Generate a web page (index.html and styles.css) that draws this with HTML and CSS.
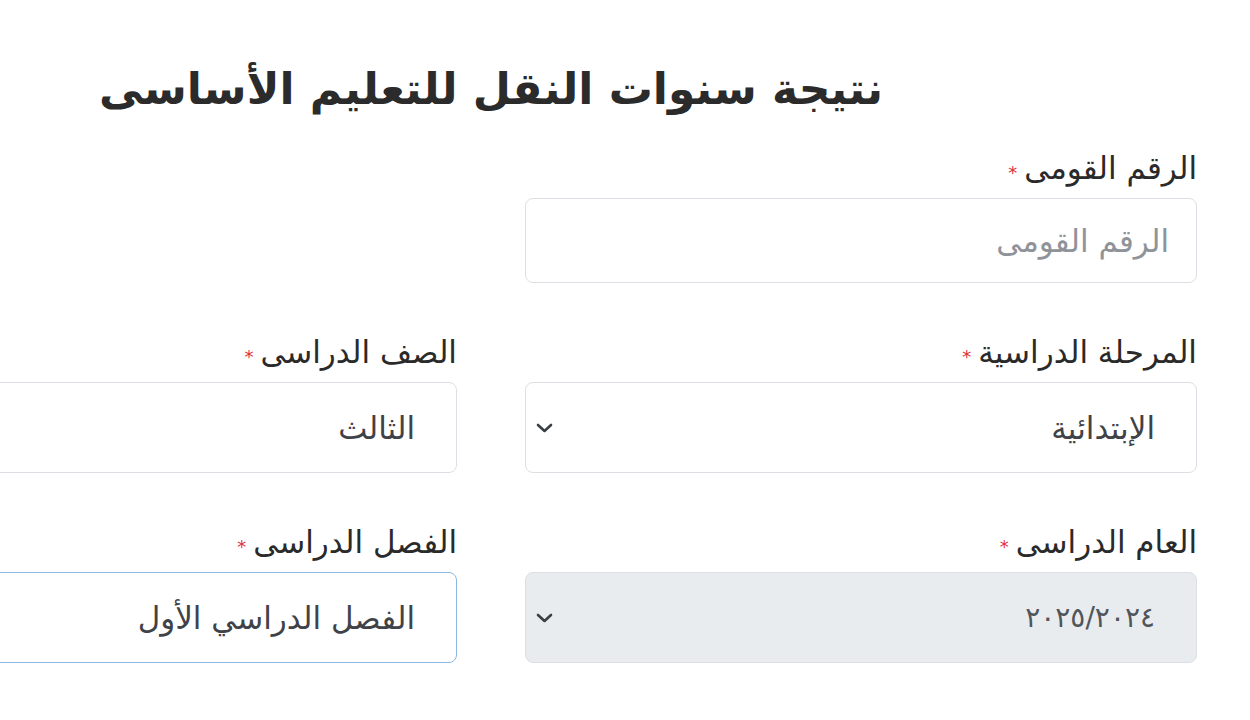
FILE: index.html
```html
<!DOCTYPE html>
<html lang="ar" dir="rtl">
<head>
<meta charset="utf-8">
<title>نتيجة سنوات النقل للتعليم الأساسى</title>
<link rel="stylesheet" href="styles.css">
</head>
<body>
<main class="page">
  <h1 class="title">نتيجة سنوات النقل للتعليم الأساسى</h1>
  <form class="form-grid">
    <div class="field field-full">
      <label class="label">الرقم القومى<span class="req">*</span></label>
      <div class="control input"><span class="placeholder">الرقم القومى</span></div>
    </div>

    <div class="field">
      <label class="label">المرحلة الدراسية<span class="req">*</span></label>
      <div class="control select">
        <span class="value">الإبتدائية</span>
        <svg class="chev" viewBox="0 0 17 10" width="17" height="10"><path d="M2 2l6.5 6 6.5-6" fill="none" stroke="#3a3f44" stroke-width="2.6" stroke-linecap="round" stroke-linejoin="round"/></svg>
      </div>
    </div>
    <div class="field">
      <label class="label">الصف الدراسى<span class="req">*</span></label>
      <div class="control select">
        <span class="value">الثالث</span>
        <svg class="chev" viewBox="0 0 17 10" width="17" height="10"><path d="M2 2l6.5 6 6.5-6" fill="none" stroke="#3a3f44" stroke-width="2.6" stroke-linecap="round" stroke-linejoin="round"/></svg>
      </div>
    </div>

    <div class="field">
      <label class="label">العام الدراسى<span class="req">*</span></label>
      <div class="control select disabled">
        <span class="value year">٢٠٢٥/٢٠٢٤</span>
        <svg class="chev" viewBox="0 0 17 10" width="17" height="10"><path d="M2 2l6.5 6 6.5-6" fill="none" stroke="#3a3f44" stroke-width="2.6" stroke-linecap="round" stroke-linejoin="round"/></svg>
      </div>
    </div>
    <div class="field">
      <label class="label">الفصل الدراسى<span class="req">*</span></label>
      <div class="control select focused">
        <span class="value">الفصل الدراسي الأول</span>
        <svg class="chev" viewBox="0 0 17 10" width="17" height="10"><path d="M2 2l6.5 6 6.5-6" fill="none" stroke="#3a3f44" stroke-width="2.6" stroke-linecap="round" stroke-linejoin="round"/></svg>
      </div>
    </div>
  </form>
</main>
</body>
</html>
```
FILE: styles.css
```css
html, body {
  margin: 0;
  padding: 0;
  background: #ffffff;
  overflow: hidden;
}

body {
  font-family: "DejaVu Sans", "Noto Sans Arabic", sans-serif;
  color: #212529;
}

.page {
  width: 1412px;
  margin-right: 53px;
  padding-top: 59px;
}

.title {
  margin: 0;
  text-align: center;
  font-size: 44px;
  font-weight: 700;
  line-height: 60px;
  color: #2b2b2b;
}

.form-grid {
  display: grid;
  grid-template-columns: 672px 672px;
  column-gap: 68px;
  row-gap: 49px;
  margin-top: 29px;
}

.field {
  display: flex;
  flex-direction: column;
}

.field-full {
  grid-column: 1 / -1;
  width: 672px;
  justify-self: start;
}

.label {
  display: flex;
  align-items: center;
  gap: 7px;
  height: 40px;
  margin-bottom: 10px;
  font-size: 31px;
  line-height: 40px;
  color: #2a2a2a;
}

.req {
  color: #e0303c;
  font-size: 18px;
  margin-top: 10px;
}

.control {
  box-sizing: border-box;
  border: 1.5px solid #dcdfe3;
  border-radius: 8px;
  background: #ffffff;
  font-size: 31px;
  display: flex;
  align-items: center;
}

.input {
  height: 85px;
  padding-right: 27px;
}

.placeholder {
  color: #8f9399;
}

.select {
  height: 91px;
  padding-right: 41px;
  padding-left: 10px;
  justify-content: space-between;
}

.value {
  color: #3f4348;
}

.disabled {
  background: #e9ecef;
}

.year {
  direction: ltr;
  unicode-bidi: isolate;
  font-size: 28px;
  color: #50555a;
}

.focused {
  border-color: #8cb9e2;
}

.chev {
  flex: none;
}
```
